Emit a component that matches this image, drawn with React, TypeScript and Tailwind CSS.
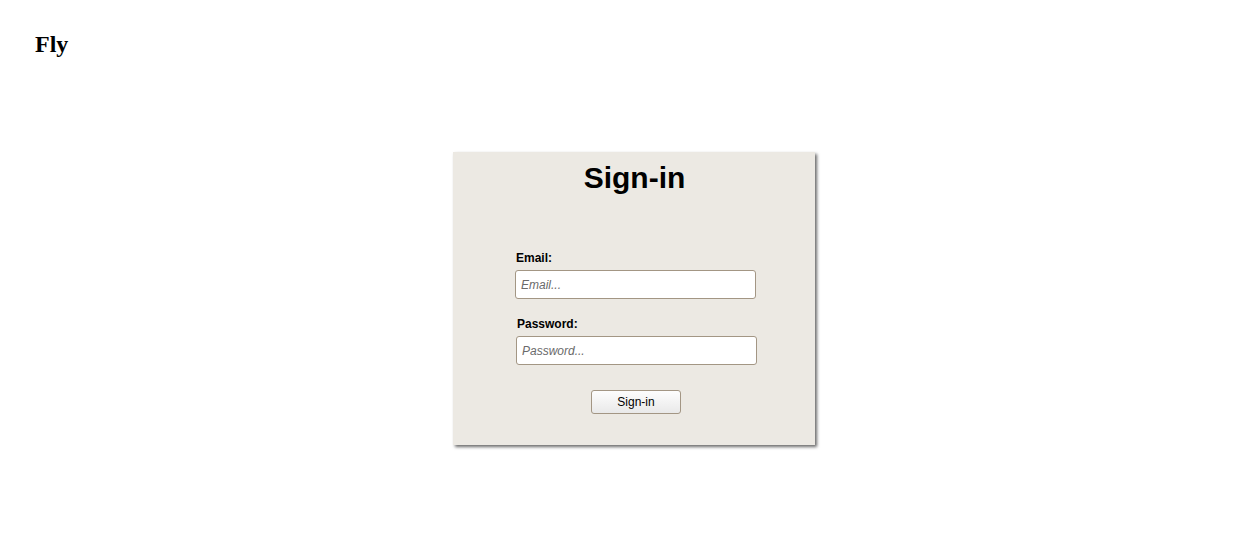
import React from "react";

export default function App() {
  return (
    <div className="min-h-[549px] w-full bg-white">
      <h2
        className="pl-[35px] pt-[26px] text-[24px] font-bold leading-normal text-black"
        style={{ fontFamily: '"Liberation Serif", serif' }}
      >
        Fly
      </h2>
      <div
        className="ml-[453px] mt-[90px] flex h-[293px] w-[362px] flex-col bg-[#ece9e3] pt-[3px] shadow-[2px_2px_3px_#6b6b6b]"
        style={{ fontFamily: '"Liberation Sans", Arial, sans-serif' }}
      >
        <h1 className="ml-[1px] text-center text-[30px] font-bold leading-normal text-black">Sign-in</h1>
        <label className="ml-[63px] mt-[49px] text-[12px] font-bold leading-normal text-black">Email:</label>
        <input
          type="text"
          placeholder="Email..."
          className="ml-[62px] mt-[3px] h-[29px] w-[241px] rounded-[3px] border border-[#a39684] bg-white px-[5px] text-[12px] outline-none placeholder:italic placeholder:text-[#6a6a6a]"
        />
        <label className="ml-[64px] mt-[16px] text-[12px] font-bold leading-normal text-black">Password:</label>
        <input
          type="password"
          placeholder="Password..."
          className="ml-[63px] mt-[3px] h-[29px] w-[241px] rounded-[3px] border border-[#a39684] bg-white px-[5px] text-[12px] outline-none placeholder:italic placeholder:text-[#6a6a6a]"
        />
        <button
          type="button"
          className="ml-[138px] mt-[25px] h-[24px] w-[90px] rounded-[3px] border border-[#a39684] bg-gradient-to-b from-[#fdfdfd] to-[#e9e9e9] text-[12px] text-black"
        >
          Sign-in
        </button>
      </div>
    </div>
  );
}
